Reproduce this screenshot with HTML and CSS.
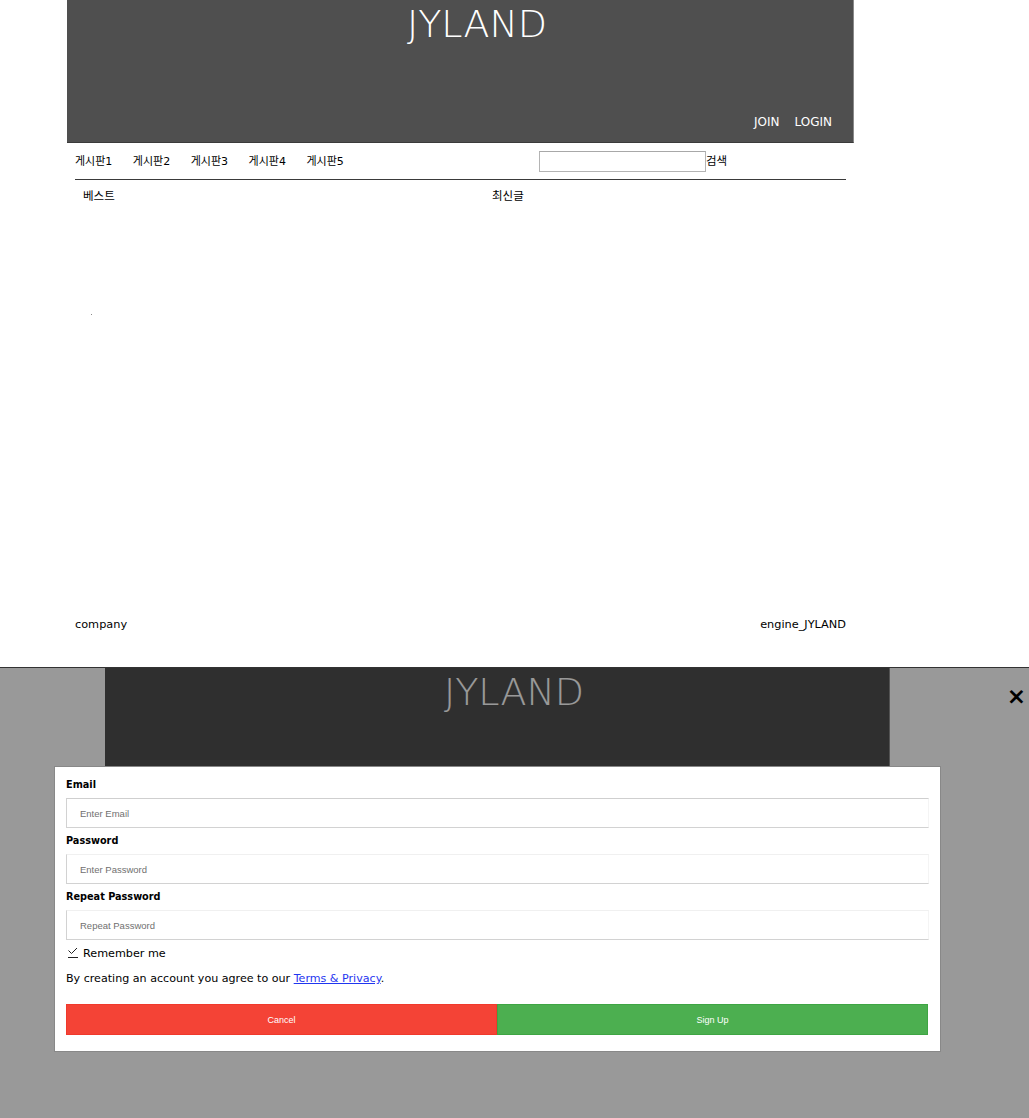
FILE: index.html
```html
<!DOCTYPE html>
<html lang="ko">
<head>
<meta charset="utf-8">
<title>JYLAND</title>
<link rel="stylesheet" href="styles.css">
</head>
<body>
<div class="site">
  <header class="top">
    <h1 class="logo">JYLAND</h1>
    <div class="auth"><a class="auth-link">JOIN</a><a class="auth-link">LOGIN</a></div>
  </header>
  <nav class="menu">
    <ul class="boards">
      <li>게시판1</li>
      <li>게시판2</li>
      <li>게시판3</li>
      <li>게시판4</li>
      <li>게시판5</li>
    </ul>
    <form class="search">
      <input class="search-box" type="text">
      <span class="search-label">검색</span>
    </form>
  </nav>
  <hr class="rule">
  <main class="columns">
    <section class="col">
      <h2 class="col-title">베스트</h2>
      <span class="dot"></span>
    </section>
    <section class="col">
      <h2 class="col-title">최신글</h2>
    </section>
  </main>
  <footer class="foot"><span>company</span><span>engine_JYLAND</span></footer>
</div>

<div class="lower">
  <header class="top ghost">
    <h1 class="logo">JYLAND</h1>
  </header>
  <div class="overlay">
    <span class="close">×</span>
    <form class="modal">
      <label class="field-label">Email</label>
      <input class="field-input first" type="text" placeholder="Enter Email">
      <label class="field-label">Password</label>
      <input class="field-input" type="password" placeholder="Enter Password">
      <label class="field-label">Repeat Password</label>
      <input class="field-input" type="password" placeholder="Repeat Password">
      <div class="remember">
        <svg class="check" width="12" height="12" viewBox="0 0 12 12"><path d="M1.5 3.5 L4.5 6.5 L10 1" fill="none" stroke="#222" stroke-width="1"/><path d="M1 10.5 H11" stroke="#222" stroke-width="1"/></svg>
        <span>Remember me</span>
      </div>
      <p class="terms">By creating an account you agree to our <a class="terms-link" href="#">Terms &amp; Privacy</a>.</p>
      <div class="actions">
        <button type="button" class="btn cancel">Cancel</button>
        <button type="button" class="btn signup">Sign Up</button>
      </div>
    </form>
  </div>
</div>
</body>
</html>
```

FILE: styles.css
```css
html, body {
  margin: 0;
  padding: 0;
  background: #fff;
}

body {
  font-family: "DejaVu Sans", "Noto Sans CJK KR", sans-serif;
  font-size: 11px;
  color: #000;
  overflow: hidden;
}

.site {
  width: 787px;
  height: 667px;
  margin-left: 67px;
  display: flex;
  flex-direction: column;
}

.top {
  height: 143px;
  box-sizing: border-box;
  background: #4f4f4f;
  border-right: 1px solid #8a8a8a;
  border-bottom: 1px solid #3a3a3a;
  display: flex;
  flex-direction: column;
  justify-content: space-between;
  flex: none;
}

.logo {
  margin: 0;
  padding-left: 34px;
  font-family: "DejaVu Sans", sans-serif;
  font-weight: 200;
  font-size: 38px;
  line-height: 48px;
  color: #fff;
  text-align: center;
}

.auth {
  display: flex;
  justify-content: flex-end;
  gap: 15px;
  padding: 0 21px 12px 0;
  font-size: 12px;
  line-height: 16px;
  color: #fff;
}

.menu {
  height: 36px;
  padding: 0 8px;
  display: grid;
  grid-template-columns: 464px auto;
  align-items: center;
  flex: none;
}

.boards {
  list-style: none;
  margin: 0;
  padding: 0 0 0 0;
  display: flex;
  gap: 20.5px;
  line-height: 16px;
  padding-top: 2px;
}

.search {
  display: flex;
  align-items: center;
  margin: 0;
}

.search-box {
  width: 167px;
  height: 21px;
  box-sizing: border-box;
  margin: 0;
  padding: 0;
  border: 1px solid #b4b4b4;
  border-top-color: #a8a8a8;
  background: #fff;
}

.search-label {
  line-height: 16px;
  font-size: 11.5px;
}

.rule {
  margin: 0 8px;
  height: 0;
  border: 0;
  border-top: 1px solid #3a3a3a;
  flex: none;
}

.columns {
  flex: 1;
  display: grid;
  grid-template-columns: 409px 1fr;
  align-items: start;
}

.col {
  padding: 8px 16px;
}

.col-title {
  margin: 0;
  font-size: 11.5px;
  font-weight: 400;
  line-height: 16px;
}

.dot {
  display: block;
  width: 1px;
  height: 1px;
  margin: 110px 0 0 8px;
  background: #8a8a8a;
}

.foot {
  display: flex;
  justify-content: space-between;
  padding: 0 8px;
  font-size: 11.3px;
  line-height: 16px;
  margin-bottom: 34px;
  padding-top: 1px;
  flex: none;
}

/* lower area with modal */
.lower {
  position: relative;
  height: 450px;
  border-top: 1px solid #333;
  padding-left: 105px;
  background: #fff;
  overflow: hidden;
}

.ghost {
  width: 785px;
}

.overlay {
  position: absolute;
  inset: 0;
  background: rgba(0, 0, 0, 0.4);
}

.close {
  position: absolute;
  right: 3px;
  top: 17px;
  font-family: "DejaVu Sans", sans-serif;
  font-weight: 700;
  font-size: 23px;
  line-height: 1;
  color: #000;
}

.modal {
  margin: 98px 0 0 54px;
  width: 887px;
  box-sizing: border-box;
  background: #fff;
  border: 1px solid #888;
  padding: 10px 11px 16px;
  display: flex;
  flex-direction: column;
}

.field-label {
  display: block;
  font-family: "DejaVu Sans Condensed", "DejaVu Sans", sans-serif;
  font-stretch: condensed;
  font-weight: 700;
  font-size: 10.8px;
  line-height: 16px;
}

.field-input {
  display: block;
  width: 100%;
  height: 30px;
  box-sizing: border-box;
  margin: 5px 0;
  padding: 0 13px;
  border: 1px solid #d2d2d2;
  border-top-color: #f0f0f0;
  border-right-color: #f4f4f4;
  background: #fff;
  font-family: "Liberation Sans", Arial, sans-serif;
  font-size: 9.5px;
  outline: none;
}

.field-input.first {
  border-top-color: #cfcfcf;
}

.field-input::placeholder {
  color: #707070;
}

.remember {
  display: flex;
  align-items: center;
  gap: 4px;
  height: 16px;
  padding-left: 1px;
  font-size: 11.2px;
}

.check {
  display: block;
}

.terms {
  margin: 10px 0 0;
  line-height: 16px;
  font-size: 11.1px;
}

.terms-link {
  color: #1f36f0;
  text-decoration: underline;
}

.actions {
  margin-top: 17px;
  display: grid;
  grid-template-columns: 1fr 1fr;
  padding-right: 1px;
}

.btn {
  height: 31px;
  margin: 0;
  border: 1px solid transparent;
  color: #fff;
  font-family: "Liberation Sans", Arial, sans-serif;
  font-size: 9px;
  cursor: pointer;
}

.cancel {
  background: #f44336;
  border-color: #f0392c;
}

.signup {
  background: #4caf50;
  border-color: #3fa544;
}
```
